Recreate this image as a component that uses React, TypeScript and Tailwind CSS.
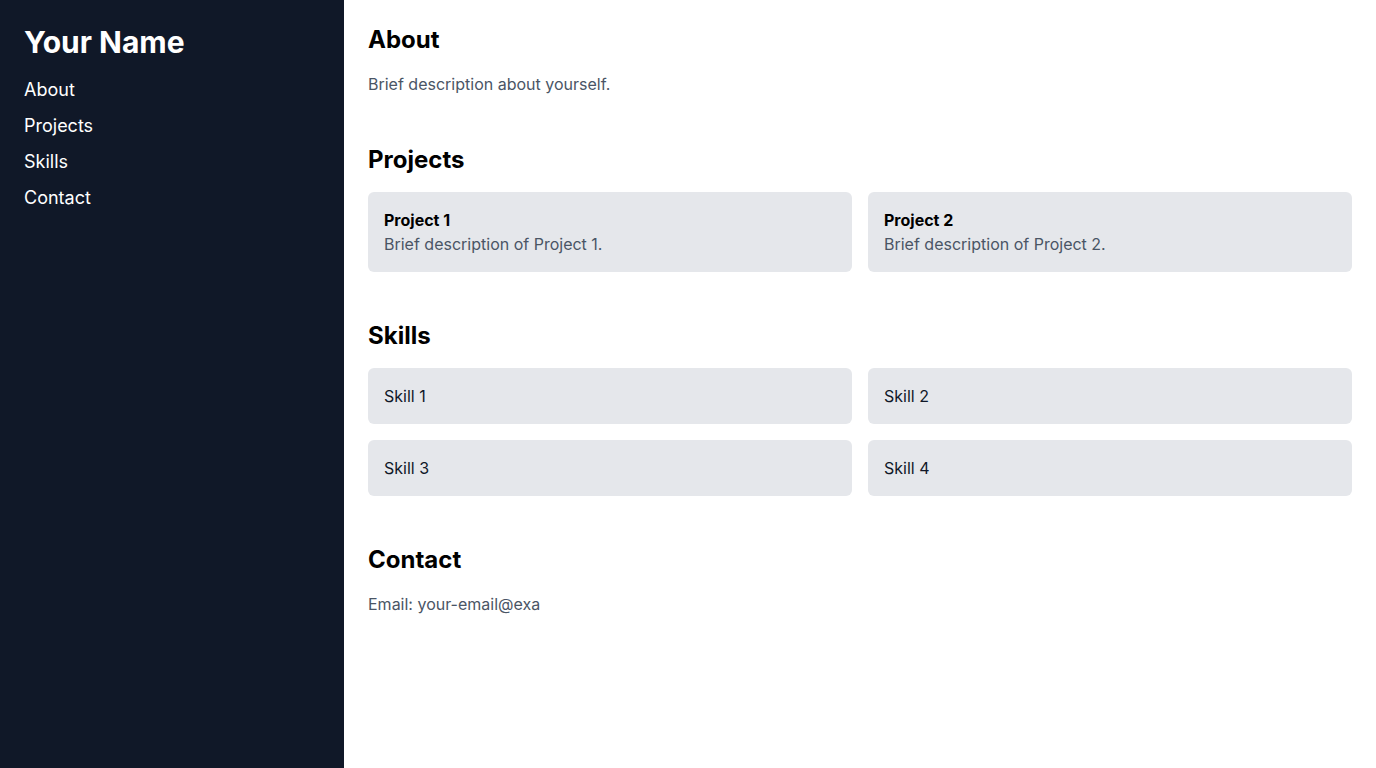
const projects = [
  { title: "Project 1", description: "Brief description of Project 1." },
  { title: "Project 2", description: "Brief description of Project 2." },
];

const skills = ["Skill 1", "Skill 2", "Skill 3", "Skill 4"];

export default function App() {
  return (
    <div className="flex min-h-screen font-['Inter',sans-serif] text-black bg-white">
      {/* Sidebar */}
      <aside className="w-1/4 shrink-0 bg-gray-900 text-white p-6">
        <h1 className="text-3xl font-bold mb-4">Your Name</h1>
        <nav className="flex flex-col gap-2">
          {["About", "Projects", "Skills", "Contact"].map((item) => (
            <a key={item} href={`#${item.toLowerCase()}`} className="text-lg">
              {item}
            </a>
          ))}
        </nav>
      </aside>

      {/* Main content */}
      <main className="flex-1 p-6">
        <section id="about" className="mb-12">
          <h2 className="text-2xl font-bold mb-4">About</h2>
          <p className="text-gray-600">Brief description about yourself.</p>
        </section>

        <section id="projects" className="mb-12">
          <h2 className="text-2xl font-bold mb-4">Projects</h2>
          <div className="grid grid-cols-2 gap-4">
            {projects.map((p) => (
              <div key={p.title} className="bg-gray-200 rounded-md p-4">
                <h3 className="font-bold">{p.title}</h3>
                <p className="text-gray-600">{p.description}</p>
              </div>
            ))}
          </div>
        </section>

        <section id="skills" className="mb-12">
          <h2 className="text-2xl font-bold mb-4">Skills</h2>
          <div className="grid grid-cols-2 gap-4">
            {skills.map((s) => (
              <div key={s} className="bg-gray-200 rounded-md p-4 text-gray-900">
                {s}
              </div>
            ))}
          </div>
        </section>

        <section id="contact">
          <h2 className="text-2xl font-bold mb-4">Contact</h2>
          <p className="text-gray-600">Email: your-email@exa</p>
        </section>
      </main>
    </div>
  );
}
